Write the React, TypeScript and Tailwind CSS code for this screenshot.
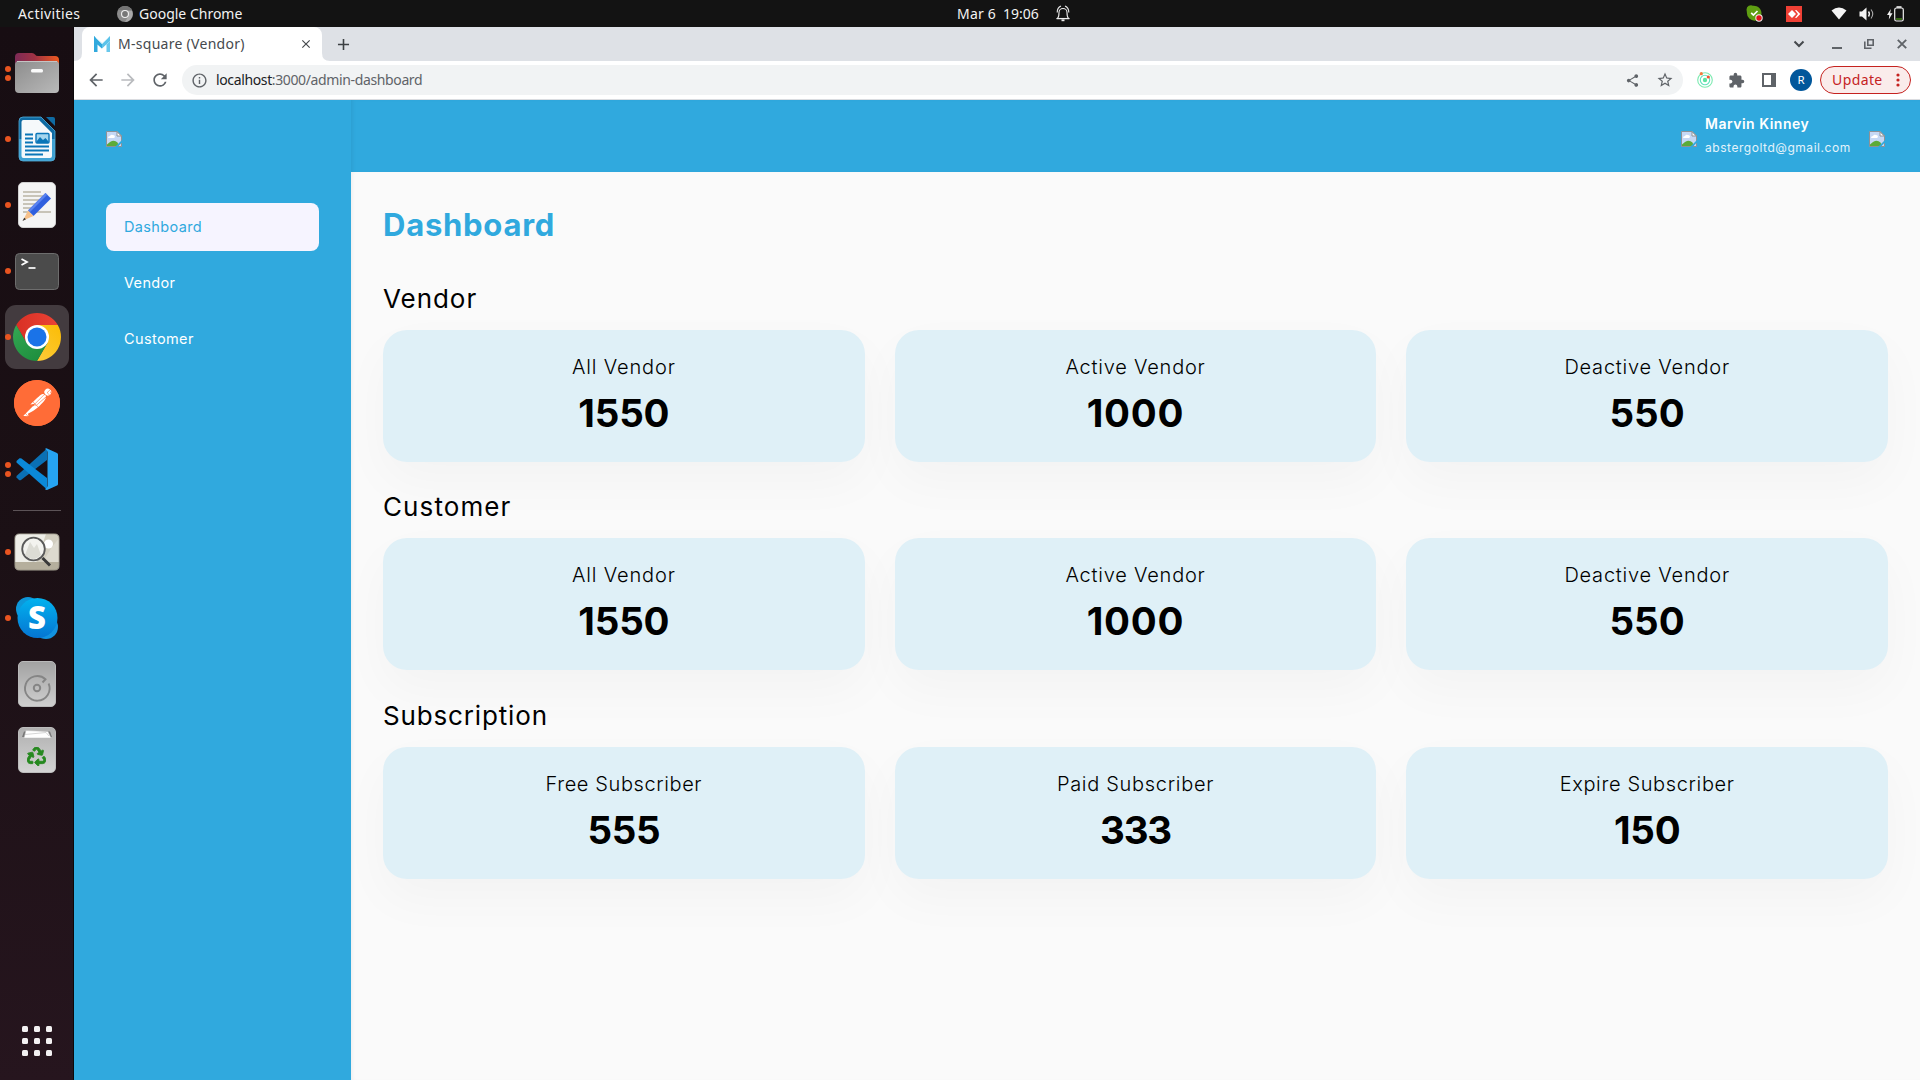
import type { ReactNode } from "react";
import { MdArrowBack, MdArrowForward, MdRefresh, MdInfoOutline, MdShare, MdStarBorder, MdExtension, MdClose, MdAdd } from "react-icons/md";
import { SiPostman } from "react-icons/si";
import { FaRecycle } from "react-icons/fa";

/* ---------- shared ---------- */

function BrokenImage() {
  return (
    <svg width="16" height="16" viewBox="0 0 16 16" className="block shrink-0">
      <path d="M0.5 0.5H11L15.5 5V15.5H0.5Z" fill="#c5d8f5" />
      <path d="M2 7q0-2 2-2 1-2 3-1 2 0 2 2l-1 1H2z" fill="#fff" />
      <path d="M1 15V13.5Q7 7 11.5 11.5L13 15Z" fill="#5cab38" />
      <path d="M11 0.5V5H15.5Z" fill="#fff" stroke="#8e9296" strokeWidth="1" />
      <path d="M0.5 0.5H11L15.5 5V15.5H0.5Z" fill="none" stroke="#8e9296" strokeWidth="1" />
      <path d="M16 9L9 16H11.500L16 11.500Z" fill="#30a9de" />
    </svg>
  );
}

/* ---------- desktop top bar ---------- */

function TopBar() {
  return (
    <header className="flex h-[27px] shrink-0 items-center bg-[#131313] text-[14px] text-[#f2f2f2]">
      <div className="flex w-[957px] items-center">
        <span className="ml-[18px] w-[99px] pb-px tracking-[0.4px]">Activities</span>
        <svg width="16" height="16" viewBox="0 0 16 16" className="mr-[6px]">
          <circle cx="8" cy="8" r="8" fill="#8b8b8b" />
          <path d="M1.1 4A8 8 0 0 1 14.9 4H8Z" fill="#737373" />
          <path d="M11.5 10L8 16A8 8 0 0 0 15 5H10.5Z" fill="#a9a9a9" />
          <circle cx="8" cy="8" r="4" fill="#f2f2f2" />
          <circle cx="8" cy="8" r="2.9" fill="#777" />
        </svg>
        <span className="pb-px">Google Chrome</span>
      </div>
      <span className="w-[46px] pb-px tracking-[0.2px]">Mar 6</span>
      <span className="w-[52px] pb-px">19:06</span>
      <svg width="16" height="17" viewBox="0 0 16 17" fill="none" stroke="#ececec" strokeWidth="1.1">
        <path d="M2.5 13.5C4 12 4 10 4 7.5a4 4 0 0 1 8 0c0 2.500 0 4.500 1.500 6Z" />
        <path d="M1.600 13.600H14.400" strokeWidth="1.300" />
        <path d="M6.500 15.300h3" strokeWidth="1.800" />
        <path d="M2.200 7.500C2.200 4 3.500 2 6 1M13.800 7.500C13.800 4 12.500 2 10 1" />
      </svg>
      <div className="ml-auto flex items-center pr-[16px]">
        <svg width="17" height="17" viewBox="0 0 17 17" className="mr-[23px]">
          <path d="M0.500 4.500A4.500 4.500 0 0 1 7 0.700A7.700 7.700 0 0 1 15.300 10A4.500 4.500 0 0 1 9.500 15.600A7.700 7.700 0 0 1 0.900 7.500Z" fill="#5f9e12" />
          <path d="M5.200 7.800L7.400 10L11.500 6" fill="none" stroke="#fff" strokeWidth="1.700" />
          <circle cx="13" cy="13" r="3.700" fill="#f5eeee" />
          <circle cx="13" cy="13" r="2.700" fill="#e0151c" />
        </svg>
        <svg width="16" height="16" viewBox="0 0 16 16" className="mr-[29px]">
          <rect width="16" height="16" fill="#ef4035" />
          <path d="M2 8L6 4L10 8L6 12Z" fill="#fff" />
          <path d="M9 4.200L10.300 4L14.300 8L10.300 12L9 11.800L12 8Z" fill="#fff" />
        </svg>
        <svg width="16" height="13" viewBox="0 0 16 13" className="mr-[12px]">
          <path d="M0.500 3.500Q8-2.500 15.500 3.500L8 12.500Z" fill="#f4f4f4" />
        </svg>
        <svg width="16" height="14" viewBox="0 0 16 14" className="mr-[12px]" fill="none" stroke="#f2f2f2">
          <path d="M0.500 4.500H3L7.500 0.500V13.500L3 9.500H0.500Z" fill="#f2f2f2" stroke="none" />
          <path d="M9.500 4.500Q11.300 7 9.500 9.500" strokeWidth="1.400" />
          <path d="M12 2.500Q15.500 7 12 11.500" strokeWidth="1.100" stroke="#aaa" />
        </svg>
        <svg width="17" height="16" viewBox="0 0 17 16">
          <path d="M3.800 3L0 9H2.300L1.800 13.500L5.500 7.200H3.200Z" fill="#f2f2f2" />
          <rect x="7.700" y="2" width="8.600" height="13" rx="1.800" fill="none" stroke="#f2f2f2" strokeWidth="1.200" />
          <path d="M9.500 1H14.500" stroke="#f2f2f2" strokeWidth="1.600" />
          <path d="M9 13H15" stroke="#4b9a17" strokeWidth="1.300" />
        </svg>
      </div>
    </header>
  );
}

/* ---------- dock ---------- */

function FilesIcon() {
  return (
    <svg width="46" height="42" viewBox="0 0 46 42">
      <defs>
        <linearGradient id="filesBack"><stop offset="0" stopColor="#7d2a56" /><stop offset="0.45" stopColor="#a03243" /><stop offset="1" stopColor="#ee5a20" /></linearGradient>
        <linearGradient id="filesFront" x1="0" y1="0" x2="1" y2="1"><stop offset="0" stopColor="#8d8d8d" /><stop offset="1" stopColor="#b9b9b9" /></linearGradient>
      </defs>
      <path d="M1 5a4 4 0 0 1 4-4H18q2 0 3 1.500T24 4H41a4 4 0 0 1 4 4V20H1Z" fill="url(#filesBack)" />
      <rect x="1" y="9" width="44" height="32" rx="4" fill="url(#filesFront)" />
      <path d="M3 9.500H43" stroke="#c4c4c4" />
      <rect x="17" y="17" width="12" height="3.500" rx="1.500" fill="#fafafa" />
    </svg>
  );
}

function WriterIcon() {
  return (
    <svg width="38" height="46" viewBox="0 0 38 46">
      <defs><linearGradient id="writerEdge" x1="0" y1="0" x2="0" y2="1"><stop offset="0.5" stopColor="#0f6ba3" /><stop offset="0.5" stopColor="#3fa2d3" /></linearGradient></defs>
      <path d="M5 1H23L37 15V41a4 4 0 0 1-4 4H5a4 4 0 0 1-4-4V5a4 4 0 0 1 4-4Z" fill="url(#writerEdge)" stroke="#54aedb" strokeWidth="0.800" />
      <path d="M5.500 4H21L34 17V40a2 2 0 0 1-2 2H5.500A2 2 0 0 1 3.500 40V6A2 2 0 0 1 5.500 4Z" fill="#f6f9fb" />
      <path d="M28 1H35a2 2 0 0 1 2 2V10Z" fill="#0f6ba3" />
      <path d="M7 18.500H15M7 22.500H15M7 26.500H15M7 30.500H31M7 34.500H31M7 38.500H25" stroke="#0a76b8" strokeWidth="1.900" />
      <rect x="18" y="17.500" width="13" height="9.500" rx="1" fill="#a5d6ee" stroke="#0a76b8" strokeWidth="1.400" />
      <path d="M18.500 25.500L22 21L25 24L27.500 22L30.500 25.500V27H18.500Z" fill="#0a76b8" />
    </svg>
  );
}

function EditorIcon() {
  return (
    <svg width="38" height="46" viewBox="0 0 38 46">
      <rect x="0.500" y="0.500" width="37" height="45" rx="4.500" fill="#f4f4f4" stroke="#d0d0d0" />
      <path d="M5 10H23M5 14H25M5 18H21M5 22H17M5 26H14M5 30H33" stroke="#c8c4b8" strokeWidth="1.800" />
      <path d="M10 28.500L27.500 11L33 16.500L15.500 34Z" fill="#2f5fde" />
      <path d="M10 28.500L27.500 11L29.300 12.800L11.800 30.300Z" fill="#5a83f0" />
      <path d="M10 28.500L15.500 34L5 38.500Z" fill="#f6c08a" />
      <path d="M6.200 35.700L8 37.300L4.500 39Z" fill="#333" />
    </svg>
  );
}

function TerminalIcon() {
  return (
    <svg width="44" height="37" viewBox="0 0 44 37">
      <rect x="0.500" y="0.500" width="43" height="36" rx="4" fill="#4b4b4b" stroke="#6d6d6d" />
      <path d="M6.500 6L12 9L6.500 12" fill="none" stroke="#fff" strokeWidth="1.800" />
      <path d="M13.500 15H20.500" stroke="#fff" strokeWidth="1.700" />
    </svg>
  );
}

function ChromeIcon() {
  return (
    <svg width="48" height="48" viewBox="0 0 48 48">
      <defs>
        <linearGradient id="chromeRed"><stop stopColor="#d93025" /><stop offset="1" stopColor="#ea4335" /></linearGradient>
        <linearGradient id="chromeYellow" x1="1" y1="0" x2="0.300" y2="1"><stop stopColor="#fbbc04" /><stop offset="1" stopColor="#fcc934" /></linearGradient>
        <linearGradient id="chromeGreen" x1="0" y1="0" x2="0.700" y2="1"><stop stopColor="#34a853" /><stop offset="1" stopColor="#1e8e3e" /></linearGradient>
      </defs>
      <path d="M3.220 12A24 24 0 0 1 44.780 12H24L13.600 30Z" fill="url(#chromeRed)" />
      <path d="M44.780 12A24 24 0 0 1 24 48L34.400 30L24 12Z" fill="url(#chromeYellow)" />
      <path d="M24 48A24 24 0 0 1 3.220 12L13.600 30L24 36L34.400 30Z" fill="url(#chromeGreen)" />
      <circle cx="24" cy="24" r="12" fill="#fff" />
      <circle cx="24" cy="24" r="9.500" fill="#1a73e8" />
    </svg>
  );
}

function PostmanIcon() {
  return (
    <span className="flex size-[46px] items-center justify-center rounded-full bg-[radial-gradient(circle,#fff_60%,#ff6c37_62%)]">
      <SiPostman size={46} color="#ff6c37" />
    </span>
  );
}

function CodeIcon() {
  return (
    <svg width="42" height="42" viewBox="0 0 42 42">
      <path d="M0.500 28L31 0.500V12L5 32Q4 32.500 3 32L0.500 29.500Z" fill="#0a70b5" />
      <path d="M0.500 13L3.500 10.300Q4.500 10 5.500 10.500L31 30V41.500L0.500 14.500Z" fill="#0b89d8" />
      <path d="M31 0.500L41 5Q42 5.500 42 6.500V36Q42 37 41 37.500L31 42Q29.500 42 29 41Q31.500 40 31.500 38V4Q31.500 2 29 1Q30 0 31 0.500Z" fill="#26a4f2" />
    </svg>
  );
}

function ViewerIcon() {
  return (
    <svg width="46" height="38" viewBox="0 0 46 38">
      <defs><clipPath id="viewerClip"><rect x="1" y="1" width="44" height="36" rx="4" /></clipPath></defs>
      <g clipPath="url(#viewerClip)">
        <rect width="46" height="38" fill="#eeeee8" />
        <path d="M32 1H46V30H22Z" fill="#d2cec0" />
        <path d="M38 14L46 4V30H28Z" fill="#dddacf" />
        <rect y="29" width="46" height="9" fill="#b5af9d" />
        <circle cx="34.500" cy="11" r="4.500" fill="#fff" />
      </g>
      <rect x="0.800" y="0.800" width="44.400" height="36.400" rx="4.500" fill="none" stroke="#8b877b" strokeWidth="0.900" />
      <circle cx="19.500" cy="16" r="11.300" fill="#f3f3ef" stroke="#595959" strokeWidth="1.800" />
      <path d="M11 22L16 9L20 15L23 11L27 22Q19 30 11 22Z" fill="#dcdcd5" />
      <path d="M28.500 25L36 32.500" stroke="#3a3a3a" strokeWidth="3" />
    </svg>
  );
}

function SkypeIcon() {
  return (
    <svg width="42" height="42" viewBox="0 0 42 42">
      <defs><linearGradient id="skypeBody" x1="0" y1="0" x2="0" y2="1"><stop stopColor="#02b2ee" /><stop offset="1" stopColor="#0575d2" /></linearGradient></defs>
      <circle cx="12" cy="12" r="12" fill="#0d97d9" />
      <circle cx="30" cy="30" r="12" fill="#1292df" />
      <circle cx="21.500" cy="21" r="20" fill="url(#skypeBody)" />
      <text x="21" y="32" textAnchor="middle" fontFamily="Open Sans, sans-serif" fontWeight="800" fontSize="31" fill="#fff">S</text>
    </svg>
  );
}

function DiskIcon() {
  return (
    <svg width="38" height="46" viewBox="0 0 38 46">
      <defs><linearGradient id="disk" x1="0" y1="0" x2="0" y2="1"><stop stopColor="#a2a2a2" /><stop offset="1" stopColor="#cfcfcf" /></linearGradient></defs>
      <rect x="0.500" y="0.500" width="37" height="45" rx="4.500" fill="url(#disk)" stroke="#b9b9b9" />
      <path d="M30.600 22.500A12.300 12.300 0 1 1 27.500 18.200L24.500 21.500" fill="none" stroke="#858585" strokeWidth="1.900" />
      <circle cx="19" cy="27" r="3.200" fill="none" stroke="#858585" strokeWidth="2" />
    </svg>
  );
}

function TrashIcon() {
  return (
    <span className="flex h-[46px] w-[38px] flex-col items-center justify-between rounded-[5px] border border-[#bcbcbc] bg-linear-to-b from-[#b0b0b0] to-[#d4d4d4] pt-[2px] pb-[6px]">
      <svg width="32" height="8" viewBox="0 0 32 8">
        <path d="M1 7L3 1.500H29L31 7Z" fill="#777" />
        <path d="M3 8L5 0.500L27 1.500L30 8Z" fill="#fff" stroke="#bbb" strokeWidth="0.500" />
        <path d="M4 4.500L25 2.500L28 6" fill="none" stroke="#ccc" strokeWidth="0.800" />
      </svg>
      <FaRecycle size={19} color="#26891f" stroke="#26891f" strokeWidth={24} />
    </span>
  );
}

function DockItem({ dots = 0, active = false, children }: { dots?: number; active?: boolean; children: ReactNode }) {
  return (
    <div className="relative flex h-[66px] items-center justify-center">
      <div className={active ? "flex size-16 items-center justify-center rounded-[11px] bg-[#433b3f]" : "flex size-16 items-center justify-center"}>{children}</div>
      <div className="absolute top-0 left-[5px] flex h-full flex-col justify-center gap-[3px]">
        {Array.from({ length: dots }, (_, i) => (
          <span key={i} className="size-[6px] rounded-full bg-[#e95420]" />
        ))}
      </div>
    </div>
  );
}

function Dock() {
  return (
    <aside className="flex w-[74px] shrink-0 flex-col border-r border-[#0b080a] bg-linear-to-b from-[#170d12] via-[#1b1015] to-[#26151e] pt-[13px]">
      <DockItem dots={2}><FilesIcon /></DockItem>
      <DockItem dots={1}><WriterIcon /></DockItem>
      <DockItem dots={1}><EditorIcon /></DockItem>
      <DockItem dots={1}><TerminalIcon /></DockItem>
      <DockItem dots={1} active><ChromeIcon /></DockItem>
      <DockItem><PostmanIcon /></DockItem>
      <DockItem dots={2}><CodeIcon /></DockItem>
      <div className="mx-[13px] my-2 h-px w-12 bg-[#5c5357]" />
      <DockItem dots={1}><ViewerIcon /></DockItem>
      <DockItem dots={1}><SkypeIcon /></DockItem>
      <DockItem><DiskIcon /></DockItem>
      <DockItem><TrashIcon /></DockItem>
      <div className="mt-auto mb-6 ml-[22px] grid w-[30px] grid-cols-3 gap-[6px]">
        {Array.from({ length: 9 }, (_, i) => (
          <span key={i} className="size-[6px] rounded-[1.500px] bg-[#f3f1f2]" />
        ))}
      </div>
    </aside>
  );
}

/* ---------- browser ---------- */

function TabStrip() {
  return (
    <div className="flex h-[34px] shrink-0 items-stretch bg-[#dee1e6] text-[#45494d]">
      <svg width="8" height="8" viewBox="0 0 8 8" className="self-end"><path d="M8 0V8H0Q8 8 8 0Z" fill="#fff" /></svg>
      <div className="flex w-[240px] items-center rounded-t-lg bg-white pr-[9px] pl-3">
        <svg width="16" height="16" viewBox="0 0 16 16">
          <path d="M0 0L8 7.500L16 0V5L8 12.500L0 5Z" fill="#5cc3ea" />
          <path d="M0 0L8 7.500V12.500L3.500 8.500V16H0Z" fill="#31a9dd" />
          <path d="M12.500 8.500L16 5V16H12.500Z" fill="#69c8ec" />
          <path d="M1.500 1.500L8 8L14.500 1.500" fill="none" stroke="#c8ebf8" strokeWidth="0.800" />
        </svg>
        <span className="ml-2 pb-[2px] text-[14px] tracking-[0.280px]">M-square (Vendor)</span>
        <MdClose size={14} className="ml-auto" />
      </div>
      <svg width="8" height="8" viewBox="0 0 8 8" className="self-end"><path d="M0 0V8H8Q0 8 0 0Z" fill="#fff" /></svg>
      <MdAdd size={19} className="ml-[4px] self-center text-[#3c4043]" />
      <div className="ml-auto flex items-center pr-[13px]">
        <svg width="12" height="8" viewBox="0 0 12 8" className="mr-[27px]"><path d="M1.500 1.500L6 6L10.500 1.500" fill="none" stroke="#45494d" strokeWidth="2" /></svg>
        <span className="mt-[8px] mr-[22px] h-[2px] w-[10px] bg-[#5f6368]" />
        <svg width="10" height="10" viewBox="0 0 10 10" className="mr-[23px]" fill="none" stroke="#5f6368" strokeWidth="1.600">
          <path d="M3.800 0.800H9.200V6.200H3.800Z" />
          <path d="M0.800 2.500V9.200H7.500" />
        </svg>
        <svg width="10" height="10" viewBox="0 0 10 10" stroke="#5f6368" strokeWidth="1.900"><path d="M0.800 0.800L9.200 9.200M9.200 0.800L0.800 9.200" /></svg>
      </div>
    </div>
  );
}

function Toolbar() {
  return (
    <div className="flex h-[39px] shrink-0 items-center border-b border-[#dadce0] bg-white pr-[9px] text-[#5f6368]">
      <MdArrowBack size={20} className="ml-3" />
      <MdArrowForward size={20} className="ml-3 text-[#b9bbbe]" />
      <MdRefresh size={20} className="ml-3" />
      <div className="ml-3 flex h-[30px] flex-1 items-center rounded-full bg-[#f1f3f4] pr-[9px] pl-[9px]">
        <MdInfoOutline size={17} />
        <span className="ml-2 pb-[2px] text-[14px] tracking-[-0.370px]"><span className="text-[#202124]">localhost</span>:3000/admin-dashboard</span>
        <MdShare size={15} className="ml-auto" />
        <MdStarBorder size={18} className="ml-[16px]" />
      </div>
      <svg width="16" height="16" viewBox="0 0 16 16" className="mr-[15px] ml-[14px]" fill="none" stroke="#7ceab0" strokeWidth="1.100">
        <circle cx="8" cy="8" r="7.300" />
        <circle cx="8" cy="8" r="4.700" stroke="#62e2bd" />
        <circle cx="8" cy="8" r="2.200" fill="#5fe3a0" stroke="none" />
        <circle cx="4.300" cy="1.700" r="1.600" fill="#f5793b" stroke="none" />
        <circle cx="11.300" cy="5" r="1.600" fill="#f4532f" stroke="none" />
      </svg>
      <MdExtension size={17} className="mr-[17px]" />
      <svg width="14" height="14" viewBox="0 0 14 14" className="mr-[14px]"><path d="M0 0H14V14H0ZM2 2V12H9V2Z" fill="#5f6368" fillRule="evenodd" /></svg>
      <span className="mr-2 flex size-[22px] items-center justify-center rounded-full bg-[#01579b] text-[11.500px] text-white">R</span>
      <div className="flex h-7 w-[91px] items-center justify-between rounded-full border border-[#c5221f] bg-[#faeceb] pr-[10px] pl-[11px] text-[14px] tracking-[0.400px] text-[#c5221f]">
        <span className="pb-px">Update</span>
        <svg width="4" height="14" viewBox="0 0 4 14" fill="#c5221f"><circle cx="2" cy="2" r="1.600" /><circle cx="2" cy="7" r="1.600" /><circle cx="2" cy="12" r="1.600" /></svg>
      </div>
    </div>
  );
}

/* ---------- page ---------- */

function Sidebar() {
  return (
    <nav className="flex w-[277px] shrink-0 flex-col bg-[#30a9de] px-8 text-[14.500px] text-white">
      <div className="flex h-[103px] pt-[31px]"><BrokenImage /></div>
      <div className="flex flex-col gap-2">
        <a className="flex h-12 items-center rounded-lg bg-[#f6f4ff] px-[18px] tracking-[0.360px] text-[#30a9de]">Dashboard</a>
        <a className="flex h-12 items-center px-[18px] tracking-[0.350px]">Vendor</a>
        <a className="flex h-12 items-center px-[18px] tracking-[0.380px]">Customer</a>
      </div>
    </nav>
  );
}

function PageHeader() {
  return (
    <header className="flex h-[72px] shrink-0 bg-[#30a9de] pr-[35px] text-white shadow-[inset_3px_0_4px_-2px_rgba(0,0,0,0.080)]">
      <div className="ml-auto flex">
        <div className="mt-[31px] mr-2"><BrokenImage /></div>
        <div className="flex w-[164px] flex-col pt-[14px]">
          <span className="text-[14px] leading-5 font-semibold tracking-[0.500px]">Marvin Kinney</span>
          <span className="mt-[4px] text-[12px] leading-5 tracking-[0.540px] text-[#e3f3fb]">abstergoltd@gmail.com</span>
        </div>
        <div className="mt-[31px]"><BrokenImage /></div>
      </div>
    </header>
  );
}

interface Stat { label: string; value: string; labelCls: string; valueCls: string }
interface Group { title: string; titleCls: string; gapCls: string; stats: Stat[] }

const vendorStats: Stat[] = [
  { label: "All Vendor", value: "1550", labelCls: "tracking-[0.850px]", valueCls: "tracking-[-0.170px]" },
  { label: "Active Vendor", value: "1000", labelCls: "tracking-[0.780px]", valueCls: "tracking-[0.800px]" },
  { label: "Deactive Vendor", value: "550", labelCls: "tracking-[0.780px]", valueCls: "tracking-[0.100px]" },
];

const groups: Group[] = [
  { title: "Vendor", titleCls: "tracking-[0.950px]", gapCls: "mb-[25px]", stats: vendorStats },
  { title: "Customer", titleCls: "tracking-[1.100px]", gapCls: "mb-[26px]", stats: vendorStats },
  {
    title: "Subscription",
    titleCls: "tracking-[0.850px]",
    gapCls: "mb-6",
    stats: [
      { label: "Free Subscriber", value: "555", labelCls: "tracking-[0.600px]", valueCls: "tracking-[-0.400px]" },
      { label: "Paid Subscriber", value: "333", labelCls: "tracking-[0.700px]", valueCls: "tracking-[-1.200px]" },
      { label: "Expire Subscriber", value: "150", labelCls: "tracking-[0.640px]", valueCls: "tracking-[-0.250px]" },
    ],
  },
];

function StatGroup({ group }: { group: Group }) {
  return (
    <section className={group.gapCls}>
      <h2 className={`mb-[11px] text-[26px] leading-10 font-normal text-black ${group.titleCls}`}>{group.title}</h2>
      <div className="grid grid-cols-3 gap-[30px]">
        {group.stats.map((s) => (
          <div key={s.label} className="flex h-[132px] flex-col items-center rounded-3xl bg-[#dff0f7] pt-[22px] text-black shadow-[0_20px_50px_rgba(0,0,0,0.030)]">
            <span className={`text-[20px] leading-[30px] font-light ${s.labelCls}`}>{s.label}</span>
            <span className={`mt-[7px] text-[38.500px] leading-[48px] font-bold ${s.valueCls}`}>{s.value}</span>
          </div>
        ))}
      </div>
    </section>
  );
}

export default function App() {
  return (
    <div className="flex h-[1080px] w-[1920px] flex-col overflow-hidden font-['Noto_Sans','Open_Sans',sans-serif]">
      <TopBar />
      <div className="flex min-h-0 flex-1">
        <Dock />
        <div className="flex min-w-0 flex-1 flex-col">
          <TabStrip />
          <Toolbar />
          <div className="flex min-h-0 flex-1 font-['Inter',sans-serif]">
            <Sidebar />
            <div className="flex min-w-0 flex-1 flex-col bg-[#fafafa]">
              <PageHeader />
              <main className="flex-1 px-8 pt-[33px] shadow-[inset_3px_0_4px_-2px_rgba(0,0,0,0.060)]">
                <h1 className="mb-[34px] text-[31px] leading-10 font-bold tracking-[0.750px] text-[#30a9de]">Dashboard</h1>
                {groups.map((g) => <StatGroup key={g.title} group={g} />)}
              </main>
            </div>
          </div>
        </div>
      </div>
    </div>
  );
}
